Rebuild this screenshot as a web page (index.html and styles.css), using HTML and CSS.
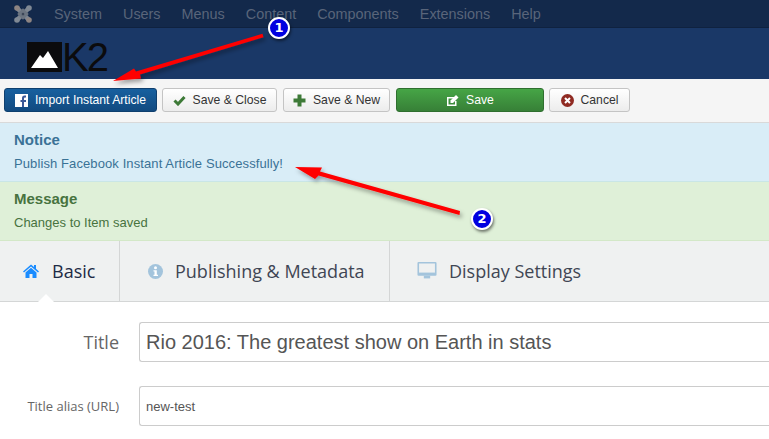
FILE: index.html
```html
<!DOCTYPE html>
<html lang="en">

<head>
    <meta charset="UTF-8">
    <meta name="viewport" content="width=device-width, initial-scale=1.0">
    <title>K2 item</title>
    <link rel="stylesheet" href="styles.css">
</head>

<body>
    <nav class="navbar">
        <svg class="joomla" width="18" height="18" viewBox="0 0 18 18">
            <path d="M3 3 L15 15 M15 3 L3 15" stroke="#7d8590" stroke-width="4.500" fill="none" />
            <path d="M5 9 L9 5 L13 9 L9 13 Z" fill="none" stroke="#6b7480" stroke-width="2.500" />
            <circle cx="9" cy="9" r="1.500" fill="#3b4657" />
            <circle cx="3" cy="3" r="2.800" fill="#8d8482" />
            <circle cx="15" cy="3" r="2.800" fill="#808994" />
            <circle cx="3" cy="15" r="2.800" fill="#808994" />
            <circle cx="15" cy="15" r="2.800" fill="#8d8482" />
        </svg>
        <ul class="menu">
            <li>System</li>
            <li>Users</li>
            <li>Menus</li>
            <li>Content</li>
            <li>Components</li>
            <li>Extensions</li>
            <li>Help</li>
        </ul>
    </nav>

    <header class="brand">
        <svg class="k2-mark" width="35" height="30" viewBox="0 0 35 30">
            <rect width="35" height="30" fill="#0b0b0d" />
            <path d="M4 26 L13 13 L16 16 L21 9 L31 26 Z" fill="#fff" />
        </svg>
        <span class="k2-text">K2</span>
    </header>

    <div class="toolbar">
        <button class="btn btn-import">
            <svg width="13" height="13" viewBox="0 0 13 13">
                <rect width="13" height="13" fill="#fff" />
                <path d="M9 13 V8 H11 V6 H9 V4.500 Q9 3.500 10 3.500 H11 V1.500 H9.500 Q7 1.500 7 4 V6 H5.500 V8 H7 V13 Z" fill="#3b5998" />
            </svg>
            Import Instant Article
        </button>
        <button class="btn btn-close">
            <svg width="13" height="11" viewBox="0 0 13 11">
                <path d="M1.500 5.500 L5 9 L11.500 2" fill="none" stroke="#3d7a37" stroke-width="3" />
            </svg>
            Save &amp; Close
        </button>
        <button class="btn btn-new">
            <svg width="13" height="13" viewBox="0 0 13 13">
                <path d="M6.500 0.500 V12.500 M0.500 6.500 H12.500" stroke="#3d7a37" stroke-width="4" />
            </svg>
            Save &amp; New
        </button>
        <button class="btn btn-save">
            <svg width="13" height="13" viewBox="0 0 13 13">
                <path d="M1 3 H8 V4.500 H2.500 V10.500 H9 V7 H10.500 V12 H1 Z" fill="#fff" />
                <path d="M4.500 6.500 L10 1 L12.500 3.500 L7 9 H4.500 Z" fill="#fff" />
            </svg>
            Save
        </button>
        <button class="btn btn-cancel">
            <svg width="13" height="13" viewBox="0 0 13 13">
                <circle cx="6.500" cy="6.500" r="6.500" fill="#8f2a22" />
                <path d="M4 4 L9 9 M9 4 L4 9" stroke="#fff" stroke-width="2" />
            </svg>
            Cancel
        </button>
    </div>

    <section class="alert alert-info">
        <h4>Notice</h4>
        <p>Publish Facebook Instant Article Successfully!</p>
    </section>
    <section class="alert alert-success">
        <h4>Message</h4>
        <p>Changes to Item saved</p>
    </section>

    <ul class="tabs">
        <li class="tab tab-basic">
            <svg width="16" height="14" viewBox="0 0 16 14">
                <path d="M0 7.500 L8 0.500 L11 3 V1 H13 V4.800 L16 7.500 L15 8.600 L8 2.500 L1 8.600 Z" fill="#1a8cff" />
                <path d="M2.500 8.500 L8 3.800 L13.500 8.500 V14 H9.500 V10 H6.500 V14 H2.500 Z" fill="#1a8cff" />
            </svg>
            Basic
        </li>
        <li class="tab tab-publish">
            <svg width="15" height="15" viewBox="0 0 15 15">
                <circle cx="7.500" cy="7.500" r="7.500" fill="#a3c4dc" />
                <circle cx="7.500" cy="3.800" r="1.500" fill="#fff" />
                <path d="M5.500 6.200 H8.800 V10.800 H10 V12 H5.500 V10.800 H6.500 V7.400 H5.500 Z" fill="#fff" />
            </svg>
            Publishing &amp; Metadata
        </li>
        <li class="tab tab-display">
            <svg width="20" height="18" viewBox="0 0 18 17">
                <path fill-rule="evenodd" d="M1 0 H17 Q18 0 18 1 V12 Q18 13 17 13 H1 Q0 13 0 12 V1 Q0 0 1 0 Z M1.500 1.500 V11 H16.500 V1.500 Z" fill="#a3c4dc" />
                <rect x="1.500" y="10" width="15" height="1.500" fill="#a3c4dc" />
                <path d="M6 13 H12 V15.500 H6 Z" fill="#a3c4dc" />
            </svg>
            Display Settings
        </li>
    </ul>

    <form class="item-form">
        <div class="field">
            <label class="label-title">Title</label>
            <input class="input input-title" type="text" value="Rio 2016: The greatest show on Earth in stats">
        </div>
        <div class="field">
            <label class="label-alias">Title alias (URL)</label>
            <input class="input input-alias" type="text" value="new-test">
        </div>
    </form>

    <!-- annotations drawn on top of the screenshot -->
    <svg class="arrows" width="769" height="439" viewBox="0 0 769 439">
        <defs>
            <filter id="shadow" x="-10%" y="-30%" width="120%" height="170%">
                <feDropShadow dx="2" dy="3" stdDeviation="2" flood-color="#000" flood-opacity="0.35" />
            </filter>
        </defs>
        <path d="M113 81 L134 68.500 L136 71.500 L262.500 33.800 L263.500 37.200 L140 74.500 L141 78.500 Z" fill="#f00" filter="url(#shadow)" />
        <path d="M295 167 L322 167.500 L320 171.500 L460 211 L459.500 215 L318.500 175.500 L315 179 Z" fill="#f00" filter="url(#shadow)" />
    </svg>
    <span class="badge badge-one">1</span>
    <span class="badge badge-two">2</span>
</body>

</html>
```

FILE: styles.css
```css
* {
    margin: 0;
    padding: 0;
    box-sizing: border-box;
}

ul {
    list-style: none;
}

body {
    position: relative;
    width: 769px;
    height: 439px;
    overflow: hidden;
    background-color: #fff;
    font-family: "Liberation Sans", Arial, sans-serif;
}

.navbar {
    display: flex;
    align-items: center;
    height: 28px;
    padding-left: 14px;
    background-color: #13294b;
    border-bottom: 1px solid #0f2240;
}

.joomla {
    flex: none;
}

.menu {
    display: flex;
    gap: 21px;
    margin-left: 22px;
    font-size: 14.400px;
    color: #59657a;
}

.brand {
    display: flex;
    align-items: center;
    height: 51px;
    padding: 7px 0 0 27px;
    background-color: #1a3867;
}

.k2-mark {
    flex: none;
}

.k2-text {
    font-size: 40px;
    line-height: 40px;
    letter-spacing: -2px;
    color: #0b0b0d;
}

.toolbar {
    display: flex;
    align-items: center;
    height: 44px;
    padding: 0 4px 1px;
    background-color: #f5f5f5;
    border-bottom: 1px solid #d9d9d9;
}

.btn {
    display: flex;
    align-items: center;
    justify-content: center;
    flex: none;
    gap: 7px;
    height: 24px;
    font-family: inherit;
    font-size: 12.200px;
    color: #333;
    background: linear-gradient(#fff, #ececec);
    border: 1px solid #c4c4c4;
    border-radius: 3px;
}

.btn-import {
    width: 153px;
    color: #fff;
    background: linear-gradient(#17609f, #124a80);
    border-color: #0f3f6e;
}

.btn-close {
    width: 115px;
    margin-left: 5px;
}

.btn-new {
    width: 107px;
    margin-left: 6px;
}

.btn-save {
    width: 148px;
    margin-left: 6px;
    color: #fff;
    background: linear-gradient(#46a546, #378037);
    border-color: #2f6f2f;
}

.btn-cancel {
    width: 81px;
    margin-left: 5px;
}

.alert {
    height: 59px;
    padding: 9px 14px 0;
    font-size: 13px;
}

.alert h4 {
    margin-bottom: 9px;
    font-size: 15px;
    line-height: 16px;
}

.alert p {
    line-height: 14px;
}

.alert-info {
    color: #3a7296;
    background-color: #d9edf7;
    border-bottom: 1px solid #c9e6e6;
}

.alert-info p {
    letter-spacing: 0.1px;
}

.alert-success {
    color: #47733f;
    background-color: #dff0d8;
    border-bottom: 1px solid #d3e8c8;
}

.tabs {
    display: flex;
    height: 61px;
    background-color: #eff1f1;
    border-bottom: 1px solid #d4d6d6;
    font-family: "Open Sans", sans-serif;
    font-size: 18px;
    color: #3f4654;
}

.tab {
    position: relative;
    display: flex;
    align-items: center;
    border-right: 1px solid #d4d6d6;
}

.tab-basic {
    width: 120px;
    gap: 13px;
    padding-left: 23px;
    color: #1d2b45;
}

/* little white notch under the active tab */
.tab-basic::after {
    content: "";
    position: absolute;
    left: 38px;
    bottom: -1px;
    border-left: 8px solid transparent;
    border-right: 8px solid transparent;
    border-bottom: 8px solid #fff;
}

.tab-publish {
    width: 270px;
    gap: 12px;
    padding-left: 28px;
}

.tab-display {
    flex: 1;
    gap: 12px;
    padding-left: 27px;
    border-right: 0;
}

.item-form {
    padding-top: 20px;
}

.field {
    display: flex;
    align-items: center;
    gap: 20px;
    margin-bottom: 24px;
}

.field label {
    flex: none;
    width: 119px;
    text-align: right;
    font-family: "Open Sans", sans-serif;
    color: #666;
}

.label-title {
    font-size: 18px;
}

.label-alias {
    font-size: 13px;
}

/* the field runs on past the right edge of the window */
.input {
    flex: 1;
    min-width: 0;
    height: 40px;
    padding: 0 6px;
    color: #555;
    background-color: #fff;
    border: 1px solid #ccc;
    border-right: 0;
    border-radius: 3px 0 0 3px;
    font-family: "Liberation Sans", Arial, sans-serif;
}

.input-title {
    font-size: 20px;
}

.input-alias {
    font-size: 13px;
}

.arrows {
    position: absolute;
    top: 0;
    left: 0;
}

.badge {
    position: absolute;
    width: 22px;
    height: 22px;
    text-align: center;
    font-family: "DejaVu Sans", sans-serif;
    font-size: 13px;
    font-weight: bold;
    line-height: 18px;
    color: #fff;
    background-color: #0000e0;
    border: 2px solid #fff;
    border-radius: 50%;
    box-shadow: 1px 2px 3px rgba(0, 0, 0, 0.5);
}

.badge-one {
    left: 268px;
    top: 17px;
}

.badge-two {
    left: 471px;
    top: 208px;
}
```
